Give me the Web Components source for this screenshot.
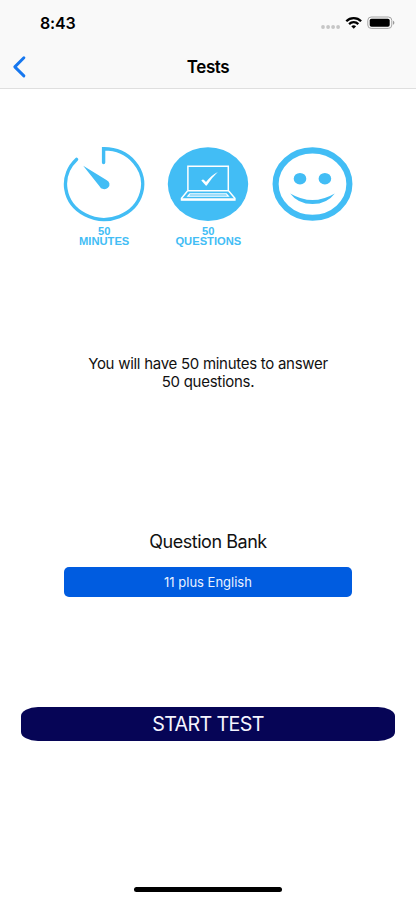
<!DOCTYPE html>
<html lang="en">
<head>
<meta charset="utf-8">
<title>Tests</title>
<style>
html, body { margin: 0; height: 100%; background: #fff; }
body { font-family: Inter, "Liberation Sans", sans-serif; color: #111; overflow: hidden; }
</style>
</head>
<body>
<tests-screen></tests-screen>
<script>
const define = (name, html) => customElements.define(name, class extends HTMLElement {
  constructor() {
    super();
    const template = document.createElement('template');
    template.innerHTML = html;
    this.attachShadow({ mode: 'open' }).append(template.content.cloneNode(true));
  }
});

define('status-bar', `
<style>
:host { display: flex; height: 45px; box-sizing: border-box; padding: 13px 21px 0 40px; justify-content: space-between; align-items: flex-start; color: #000; }
.time { font-size: 16px; line-height: 20px; font-weight: 600; letter-spacing: -0.2px; }
svg { display: block; }
</style>
<span class="time">8:43</span>
<svg width="75" height="20" viewBox="320 13 75 20">
  <g fill="#c6c6c6"><circle cx="323" cy="27" r="1.9"/><circle cx="328.1" cy="27" r="1.9"/><circle cx="333.1" cy="27" r="1.9"/><circle cx="338.1" cy="27" r="1.9"/></g>
  <g fill="none" stroke="#000" stroke-width="2.3"><path d="M346.3 21.2a10.3 10.3 0 0 1 14.8 0"/><path d="M349.1 24.1a6.5 6.5 0 0 1 9.2 0"/></g>
  <path d="M351.3 26.3a3.6 3.6 0 0 1 4.8 0l-2.4 2.4z"/>
  <rect x="367.8" y="17" width="24" height="11.4" rx="3.4" fill="none" stroke="#a5a5a5"/>
  <rect x="369.7" y="18.8" width="20" height="8" rx="1.8"/>
  <path d="M393 20.8q1.4.7 1.4 2t-1.4 2z" fill="#999"/>
</svg>`);

define('nav-bar', `
<style>
:host { display: grid; grid-template-columns: 60px 1fr 60px; height: 44px; box-sizing: border-box; border-bottom: 1px solid #dfdfdf; align-items: center; color: #000; }
svg { display: block; margin-left: 12px; }
h1 { margin: 0; text-align: center; font-size: 17px; line-height: 22px; font-weight: 600; letter-spacing: -0.4px; }
</style>
<svg width="15" height="24" viewBox="12 55 15 24"><path d="M23.9 57.8 14.8 66.9l9.1 9" fill="none" stroke="#1677ef" stroke-width="2.9" stroke-linecap="round" stroke-linejoin="round"/></svg>
<h1><slot></slot></h1>`);

define('fact-badge', `
<style>
:host { display: flex; flex-direction: column; align-items: center; width: 82px; color: #42bdf5; }
.caption { margin-top: 5px; text-align: center; font: bold 10.3px/10px "Liberation Sans", Arial, sans-serif; white-space: nowrap; transform: scaleX(1.085); }
</style>
<slot name="icon"></slot>
<div class="caption"><slot></slot></div>`);

define('timer-icon', `
<style>:host, svg { display: block; }</style>
<svg width="82" height="76" viewBox="63 146 82 76">
  <path d="M103.6 162.5V148.8a38.6 35.3 0 1 1-27.1 10.6" fill="none" stroke="#42bdf5" stroke-width="3.4" stroke-linecap="round"/>
  <path d="M83.2 165.7 106.4 180A5.2 4.8 0 1 1 99.5 186.2Z" fill="#42bdf5"/>
</svg>`);

define('laptop-icon', `
<style>:host, svg { display: block; }</style>
<svg width="82" height="76" viewBox="167 146 82 76">
  <ellipse cx="208" cy="184.1" rx="40.2" ry="36.9" fill="#42bdf5"/>
  <g fill="none" stroke="#fff" stroke-width="1.5">
    <path d="M187.9 166.2h40.4v24.6h-40.4z"/>
    <path d="M187.5 191 181.5 198.3V200h53.4v-1.7L228.7 191"/>
    <path d="M181.5 199.2h53.4" stroke-width="2"/>
    <path d="M189.9 193.8h36.4l2.1 2.4h-40.6z" stroke-width="1.2"/>
  </g>
  <path d="M201.3 180.5q1.7-1.8 2.7-.6l2 2.2q4.8-6.7 11.8-10.2-6 5.6-10.7 13.2-.9 1.2-1.8 0z" fill="#fff"/>
</svg>`);

define('smile-icon', `
<style>:host, svg { display: block; }</style>
<svg width="82" height="76" viewBox="272 146 82 76">
  <ellipse cx="312.5" cy="184.1" rx="36.9" ry="33.7" fill="none" stroke="#42bdf5" stroke-width="6.1"/>
  <g fill="#42bdf5"><ellipse cx="300" cy="178.7" rx="6.3" ry="5.8"/><ellipse cx="324.9" cy="178.7" rx="6.3" ry="5.8"/>
  <path d="M290.2 193.4Q312.5 206.5 334.8 193.4 327 204 312.5 204T290.2 193.4Z"/></g>
</svg>`);

define('bank-picker', `
<style>
:host { display: block; padding: 0 64px; text-align: center; }
h2 { margin: 0 0 13px; font-size: 18px; line-height: 24px; font-weight: 400; letter-spacing: -0.46px; color: #111; }
button { display: block; width: 100%; height: 30px; padding: 0; border: 0; border-radius: 5px; background: #005ce0; color: #e9f2ff; font: 13px/30px Inter, "Liberation Sans", sans-serif; }
</style>
<h2><slot name="label"></slot></h2>
<button><slot></slot></button>`);

define('start-button', `
<style>
:host { display: block; padding: 0 21px; }
button { display: block; width: 100%; height: 34px; padding: 0; border: 0; border-radius: 17px / 9px; background: #060556; color: #f5f5ff; font: 19.7px/34px Inter, "Liberation Sans", sans-serif; letter-spacing: -0.65px; }
</style>
<button><slot></slot></button>`);

define('home-indicator', `
<style>:host { display: block; width: 148px; height: 5px; border-radius: 3px; background: #000; margin: 0 auto; }</style>`);

define('tests-screen', `
<style>
:host { display: flex; flex-direction: column; width: 416px; height: 900px; background: #fff; }
header { background: #f9f9f9; }
.facts { display: grid; grid-template-columns: 104px 105px 82px; padding: 57px 0 0 63px; height: 158px; box-sizing: border-box; }
.note { margin: 108px 0 0; text-align: center; font-size: 15px; line-height: 18px; letter-spacing: -0.28px; }
bank-picker { margin-top: 139px; }
start-button { margin-top: 110px; }
home-indicator { margin-top: auto; margin-bottom: 8px; }
</style>
<header><status-bar></status-bar><nav-bar>Tests</nav-bar></header>
<section class="facts">
  <fact-badge><timer-icon slot="icon"></timer-icon>50<br>MINUTES</fact-badge>
  <fact-badge><laptop-icon slot="icon"></laptop-icon>50<br>QUESTIONS</fact-badge>
  <fact-badge><smile-icon slot="icon"></smile-icon></fact-badge>
</section>
<p class="note">You will have 50 minutes to answer<br>50 questions.</p>
<bank-picker><span slot="label">Question Bank</span>11 plus English</bank-picker>
<start-button>START TEST</start-button>
<home-indicator></home-indicator>`);
</script>
</body>
</html>
